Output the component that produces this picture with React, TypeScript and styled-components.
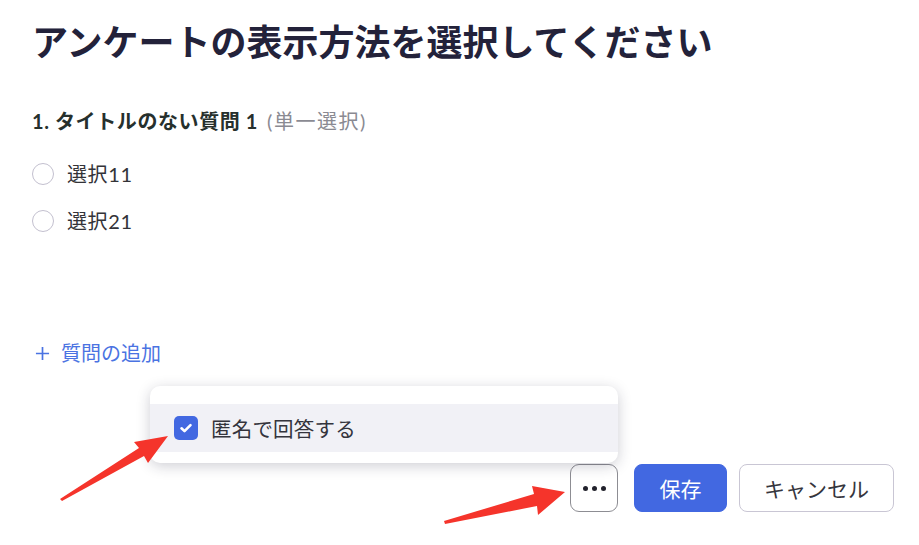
import React from "react";
import styled, { createGlobalStyle } from "styled-components";

const Global = createGlobalStyle`
  html, body { margin: 0; padding: 0; background: #fff; }
  body { font-family: "Lato", "Noto Sans CJK JP", sans-serif; }
`;

const Page = styled.div`
  position: relative;
  width: 919px;
  height: 545px;
  overflow: hidden;
  box-sizing: border-box;
  padding: 18px 25px 0 32px;
  display: flex;
  flex-direction: column;
`;

const Title = styled.h1`
  margin: 0;
  font-size: 36px;
  line-height: 48px;
  font-weight: 700;
  color: #23223a;
`;

const Question = styled.div`
  margin-top: 43px;
  font-size: 20px;
  line-height: 24px;
  font-weight: 700;
  color: #26302d;
  letter-spacing: 0.6px;
  display: flex;
  align-items: baseline;
  gap: 9px;
`;

const QType = styled.span`
  font-weight: 400;
  color: #8a8a92;
  letter-spacing: 1.5px;
`;

const Options = styled.div`
  margin-top: 29px;
  display: flex;
  flex-direction: column;
  gap: 23px;
`;

const Option = styled.label`
  display: flex;
  align-items: center;
  gap: 13px;
  font-size: 20px;
  line-height: 24px;
  letter-spacing: 0.6px;
  color: #333338;
`;

const Radio = styled.span`
  width: 22px;
  height: 22px;
  border-radius: 50%;
  border: 1px solid #c3c0cf;
  box-sizing: border-box;
  background: #fff;
`;

const AddLink = styled.div`
  margin-top: 108px;
  display: flex;
  align-items: center;
  gap: 11px;
  color: #4a73e2;
  font-size: 20px;
  line-height: 24px;
  padding-left: 3px;
`;

const Footer = styled.div`
  margin-top: 99px;
  display: flex;
  justify-content: flex-end;
  gap: 12px;
`;

const MoreWrap = styled.div`
  position: relative;
  margin-right: 4px;
`;

const MoreButton = styled.button`
  width: 48px;
  height: 48px;
  box-sizing: border-box;
  border: 1px solid #8d8d93;
  border-radius: 9px;
  background: #fff;
  display: flex;
  align-items: center;
  justify-content: center;
  gap: 4px;
  padding: 0;
`;

const Dot = styled.span`
  width: 5px;
  height: 5px;
  border-radius: 50%;
  background: #22222c;
`;

const Button = styled.button<{ $primary?: boolean }>`
  height: 48px;
  box-sizing: border-box;
  border-radius: 8px;
  font-family: "Lato", "Noto Sans CJK JP", sans-serif;
  font-size: 21px;
  padding: 0;
  min-width: ${(p) => (p.$primary ? "93px" : "155px")};
  border: 1px solid ${(p) => (p.$primary ? "#4268e1" : "#c9c6d4")};
  background: ${(p) => (p.$primary ? "#4268e1" : "#fff")};
  color: ${(p) => (p.$primary ? "#fff" : "#35353d")};
`;

const Menu = styled.div`
  position: absolute;
  right: 0;
  bottom: calc(100% + 1px);
  width: 468px;
  height: 77px;
  box-sizing: border-box;
  background: #fff;
  border-radius: 10px;
  box-shadow: 0 3px 14px rgba(30, 30, 60, 0.22);
  padding-top: 18px;
`;

const MenuItem = styled.div`
  height: 48px;
  background: #f1f1f6;
  display: flex;
  align-items: center;
  gap: 13px;
  padding-left: 24px;
  font-size: 20.5px;
  letter-spacing: 0.2px;
  color: #34343c;
`;

const Check = styled.span`
  width: 24px;
  height: 24px;
  border-radius: 5px;
  background: #4268e1;
  display: flex;
  align-items: center;
  justify-content: center;
`;

const ArrowLayer = styled.svg`
  position: absolute;
  left: 0;
  top: 0;
  pointer-events: none;
`;

export default function App() {
  return (
    <>
      <Global />
      <Page>
        <Title>アンケートの表示方法を選択してください</Title>
        <Question>
          <span>1. タイトルのない質問 1</span>
          <QType>(単一選択)</QType>
        </Question>
        <Options>
          <Option>
            <Radio />
            選択11
          </Option>
          <Option>
            <Radio />
            選択21
          </Option>
        </Options>
        <AddLink>
          <svg width="15" height="15" viewBox="0 0 16 16">
            <path d="M8 1v14M1 8h14" stroke="#4a73e2" strokeWidth="1.8" />
          </svg>
          <span>質問の追加</span>
        </AddLink>
        <Footer>
          <MoreWrap>
            <Menu>
              <MenuItem>
                <Check>
                  <svg width="16" height="16" viewBox="0 0 16 16">
                    <path
                      d="M3.5 8.3l3 2.8 6-6"
                      fill="none"
                      stroke="#fff"
                      strokeWidth="2.6"
                      strokeLinecap="round"
                      strokeLinejoin="round"
                    />
                  </svg>
                </Check>
                匿名で回答する
              </MenuItem>
            </Menu>
            <MoreButton>
              <Dot />
              <Dot />
              <Dot />
            </MoreButton>
          </MoreWrap>
          <Button $primary>保存</Button>
          <Button>キャンセル</Button>
        </Footer>
        <ArrowLayer width="919" height="545" viewBox="0 0 919 545">
          <polygon
            points="60,499 139,448 134,442 168,436 148,463 144,456 62,501"
            fill="#f5342b"
          />
          <polygon
            points="444,521 534,494 532,486 565,492 538,515 537,506 445,524"
            fill="#f5342b"
          />
        </ArrowLayer>
      </Page>
    </>
  );
}
